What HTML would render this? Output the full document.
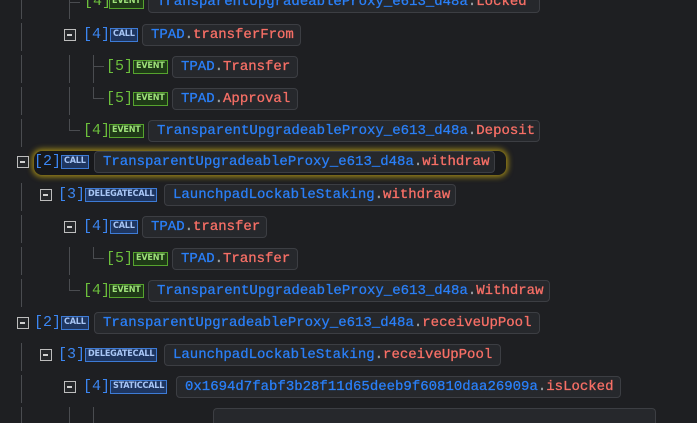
<!DOCTYPE html><html style="overflow:hidden;height:423px"><head><style>
body{margin:0;width:697px;height:423px;background:#1e1f22;overflow:hidden;position:relative;font-family:"Liberation Mono",monospace}
div{position:absolute;box-sizing:border-box}
.v{width:1px;background:#4a4c50}
.h{height:1px;background:#4a4c50;width:11px}
.t{width:12px;height:12px;border:1.5px solid #bdbdbd;background:#25272a}
.t:after{content:"";position:absolute;left:2px;top:3.5px;width:5px;height:2px;background:#d0d0d0}
.lb{font-size:15px;height:22px;line-height:22px;white-space:nowrap}
.b{color:#3b86f2}.g{color:#6cbf3c}
.bd{height:14px;line-height:12px;font:bold 9px "DejaVu Sans Condensed","DejaVu Sans",sans-serif;letter-spacing:-0.2px;padding:0 2px;border:1px solid;white-space:nowrap}
.cb{color:#a8c6f6;border-color:#3d7bd6;background:#1f3660}
.eb{color:#9ee07a;border-color:#56a32e;background:#1f3a17}
.bx{height:22px;border:1px solid #3c3e43;background:#26282c;border-radius:4px;font-size:14px;line-height:20px;padding-left:8px;color:#2a7ff7;white-space:nowrap;-webkit-text-stroke:0.3px currentColor}
.bx span{color:#f76f66}
.bx i{font-style:normal;color:#9aa0a6}
</style></head><body>
<div class="v" style="left:21px;top:0;height:19px"></div>
<div class="v" style="left:21px;top:23px;height:28px"></div>
<div class="v" style="left:21px;top:55px;height:28px"></div>
<div class="v" style="left:21px;top:87px;height:28px"></div>
<div class="v" style="left:21px;top:119px;height:28px"></div>
<div class="v" style="left:21px;top:183px;height:28px"></div>
<div class="v" style="left:21px;top:215px;height:28px"></div>
<div class="v" style="left:21px;top:247px;height:28px"></div>
<div class="v" style="left:21px;top:279px;height:28px"></div>
<div class="v" style="left:21px;top:343px;height:28px"></div>
<div class="v" style="left:21px;top:375px;height:28px"></div>
<div class="v" style="left:21px;top:407px;height:16px"></div>
<div class="v" style="left:69px;top:0;height:19px"></div><div class="h" style="left:69px;top:2px"></div>
<div class="v" style="left:69px;top:55px;height:28px"></div>
<div class="v" style="left:69px;top:87px;height:28px"></div>
<div class="v" style="left:69px;top:119px;height:12px"></div><div class="h" style="left:69px;top:130px"></div>
<div class="v" style="left:69px;top:247px;height:28px"></div>
<div class="v" style="left:69px;top:279px;height:12px"></div><div class="h" style="left:69px;top:290px"></div>
<div class="v" style="left:69px;top:407px;height:16px"></div>
<div class="v" style="left:93px;top:55px;height:28px"></div><div class="h" style="left:93px;top:66px"></div>
<div class="v" style="left:93px;top:87px;height:12px"></div><div class="h" style="left:93px;top:98px"></div>
<div class="v" style="left:93px;top:247px;height:12px"></div><div class="h" style="left:93px;top:258px"></div>
<div class="v" style="left:93px;top:407px;height:16px"></div>

<div class="lb g" style="left:84px;top:-9px">[4]</div><div class="bd eb" style="left:109px;top:-5px">EVENT</div>
<div class="bx" style="left:148px;top:-9px;width:392px">TransparentUpgradeableProxy_e613_d48a<i>.</i><span>Locked</span></div>

<div class="t" style="left:64px;top:29px"></div>
<div class="lb b" style="left:83px;top:24px">[4]</div><div class="bd cb" style="left:110px;top:28px">CALL</div>
<div class="bx" style="left:142px;top:24px;width:159px">TPAD<i>.</i><span>transferFrom</span></div>

<div class="lb g" style="left:106px;top:56px">[5]</div><div class="bd eb" style="left:133px;top:60px">EVENT</div>
<div class="bx" style="left:172px;top:56px;width:126px">TPAD<i>.</i><span>Transfer</span></div>

<div class="lb g" style="left:106px;top:88px">[5]</div><div class="bd eb" style="left:133px;top:92px">EVENT</div>
<div class="bx" style="left:172px;top:88px;width:126px">TPAD<i>.</i><span>Approval</span></div>

<div class="lb g" style="left:83px;top:120px">[4]</div><div class="bd eb" style="left:109px;top:124px">EVENT</div>
<div class="bx" style="left:148px;top:120px;width:392px">TransparentUpgradeableProxy_e613_d48a<i>.</i><span>Deposit</span></div>

<div style="left:34px;top:151px;width:472px;height:24px;border-radius:8px;background:#17181b;box-shadow:0 0 6px 2px rgba(200,170,20,.75)"></div>
<div class="t" style="left:17px;top:156px"></div>
<div class="lb b" style="left:34px;top:151px">[2]</div><div class="bd cb" style="left:61px;top:155px">CALL</div>
<div class="bx" style="left:94px;top:151px;width:401px">TransparentUpgradeableProxy_e613_d48a<i>.</i><span>withdraw</span></div>

<div class="t" style="left:40px;top:189px"></div>
<div class="lb b" style="left:58px;top:184px">[3]</div><div class="bd cb" style="left:85px;top:188px">DELEGATECALL</div>
<div class="bx" style="left:164px;top:184px;width:292px">LaunchpadLockableStaking<i>.</i><span>withdraw</span></div>

<div class="t" style="left:64px;top:221px"></div>
<div class="lb b" style="left:83px;top:216px">[4]</div><div class="bd cb" style="left:110px;top:220px">CALL</div>
<div class="bx" style="left:142px;top:216px;width:125px">TPAD<i>.</i><span>transfer</span></div>

<div class="lb g" style="left:106px;top:248px">[5]</div><div class="bd eb" style="left:133px;top:252px">EVENT</div>
<div class="bx" style="left:172px;top:248px;width:126px">TPAD<i>.</i><span>Transfer</span></div>

<div class="lb g" style="left:83px;top:280px">[4]</div><div class="bd eb" style="left:109px;top:284px">EVENT</div>
<div class="bx" style="left:148px;top:280px;width:402px">TransparentUpgradeableProxy_e613_d48a<i>.</i><span>Withdraw</span></div>

<div class="t" style="left:17px;top:317px"></div>
<div class="lb b" style="left:34px;top:312px">[2]</div><div class="bd cb" style="left:61px;top:316px">CALL</div>
<div class="bx" style="left:94px;top:312px;width:446px">TransparentUpgradeableProxy_e613_d48a<i>.</i><span>receiveUpPool</span></div>

<div class="t" style="left:40px;top:349px"></div>
<div class="lb b" style="left:58px;top:344px">[3]</div><div class="bd cb" style="left:85px;top:348px">DELEGATECALL</div>
<div class="bx" style="left:164px;top:344px;width:337px">LaunchpadLockableStaking<i>.</i><span>receiveUpPool</span></div>

<div class="t" style="left:64px;top:381px"></div>
<div class="lb b" style="left:83px;top:376px">[4]</div><div class="bd cb" style="left:110px;top:380px">STATICCALL</div>
<div class="bx" style="left:176px;top:376px;width:445px">0x1694d7fabf3b28f11d65deeb9f60810daa26909a<i>.</i><span>isLocked</span></div>

<div class="bx" style="left:213px;top:408px;width:443px;height:15px;border-bottom:none;border-radius:4px 4px 0 0"></div>
</body></html>
